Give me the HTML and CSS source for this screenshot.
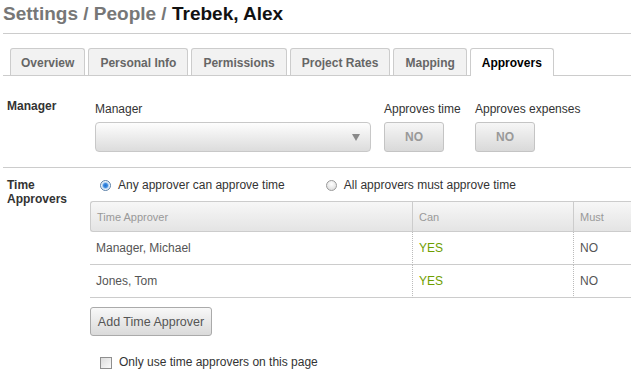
FILE: index.html
```html
<!DOCTYPE html>
<html lang="en">
<head>
    <meta charset="UTF-8">
    <meta name="viewport" content="width=device-width, initial-scale=1.0">
    <title>Approvers | Trebek, Alex</title>
    <link rel="stylesheet" href="styles.css">
</head>
<body>

    <div class="page">
        <!-- Breadcrumb title -->
        <h1 class="crumbs"><span class="crumb">Settings / People /</span> Trebek, Alex</h1>

        <!-- Tabs -->
        <ul class="tabs">
            <li class="tab">Overview</li>
            <li class="tab">Personal Info</li>
            <li class="tab">Permissions</li>
            <li class="tab">Project Rates</li>
            <li class="tab">Mapping</li>
            <li class="tab active">Approvers</li>
        </ul>

        <!-- Manager -->
        <section class="row row-manager">
            <h2 class="row-label">Manager</h2>
            <div class="row-body manager-fields">
                <div class="field field-manager">
                    <label class="field-label">Manager</label>
                    <div class="select"><span class="select-arrow"></span></div>
                </div>
                <div class="field field-time">
                    <label class="field-label">Approves time</label>
                    <button class="toggle">NO</button>
                </div>
                <div class="field field-expenses">
                    <label class="field-label">Approves expenses</label>
                    <button class="toggle">NO</button>
                </div>
            </div>
        </section>

        <!-- Time Approvers -->
        <section class="row row-approvers">
            <h2 class="row-label">Time<br>Approvers</h2>
            <div class="row-body">
                <div class="radios">
                    <label class="radio"><input type="radio" name="mode" checked> Any approver can approve time</label>
                    <label class="radio"><input type="radio" name="mode"> All approvers must approve time</label>
                </div>

                <table class="approvers">
                    <colgroup>
                        <col class="col-name">
                        <col class="col-can">
                        <col class="col-must">
                    </colgroup>
                    <thead>
                        <tr>
                            <th>Time Approver</th>
                            <th>Can</th>
                            <th>Must</th>
                        </tr>
                    </thead>
                    <tbody>
                        <tr>
                            <td>Manager, Michael</td>
                            <td class="yes">YES</td>
                            <td>NO</td>
                        </tr>
                        <tr>
                            <td>Jones, Tom</td>
                            <td class="yes">YES</td>
                            <td>NO</td>
                        </tr>
                    </tbody>
                </table>

                <button class="btn">Add Time Approver</button>

                <label class="check"><input type="checkbox"> Only use time approvers on this page</label>
            </div>
        </section>
    </div>

</body>
</html>
```

FILE: styles.css
```css
/* Reset */
body, h1, h2, ul, table {
    margin: 0;
    padding: 0;
}

body {
    font-family: "Liberation Sans", Arial, sans-serif;
    font-size: 12px;
    color: #333;
    background-color: #fff;
    overflow: hidden;
}

.page {
    padding-left: 3px;
}

/* Title */
.crumbs {
    font-size: 19px;
    line-height: 24px;
    padding: 2px 0 7px;
    border-bottom: 1px solid #ccc;
    color: #111;
}

.crumbs .crumb {
    color: #777;
}

/* Tabs */
.tabs {
    list-style: none;
    display: flex;
    gap: 3px;
    margin-top: 14px;
    padding-left: 7px;
    border-bottom: 1px solid #ccc;
}

.tab {
    padding: 2px 11px 0;
    line-height: 24px;
    font-size: 12px;
    font-weight: bold;
    color: #666;
    background-color: #f2f2f2;
    border: 1px solid #ccc;
    border-bottom: none;
    border-radius: 3px 3px 0 0;
}

.tab:first-child {
    padding: 2px 10px 0;
}

.tab.active {
    color: #000;
    background-color: #fff;
    margin-bottom: -1px;
    padding: 2px 11px 1px;
}

/* Section rows */
.row {
    display: grid;
    grid-template-columns: 87px 1fr;
    border-bottom: 1px solid #ccc;
}

.row-label {
    font-size: 12px;
    font-weight: bold;
    padding-left: 4px;
    color: #333;
}

.row-manager {
    padding: 23px 0 15px;
}

.row-manager .row-label {
    line-height: 15px;
}

.row-approvers {
    padding: 10px 0 0;
    border-bottom: none;
}

.row-approvers .row-label {
    line-height: 14px;
}

/* Manager fields */
.manager-fields {
    display: flex;
    padding-left: 5px;
}

.field-label {
    display: block;
    line-height: 15px;
    margin: 3px 0 5px;
    color: #333;
}

.select {
    position: relative;
    width: 274px;
    height: 28px;
    border: 1px solid #c8c8c8;
    border-radius: 4px;
    background: linear-gradient(#fdfdfd, #dcdcdc);
}

.select-arrow {
    position: absolute;
    right: 10px;
    top: 11px;
    border-left: 4px solid transparent;
    border-right: 4px solid transparent;
    border-top: 7px solid #8a8a8a;
}

.field-time {
    margin-left: 13px;
    width: 91px;
}

.toggle {
    display: block;
    width: 60px;
    height: 30px;
    padding: 0;
    font-family: inherit;
    font-size: 12px;
    font-weight: bold;
    color: #999;
    border: 1px solid #c4c4c4;
    border-radius: 3px;
    background: linear-gradient(#f6f6f6, #d9d9d9);
}

/* Radios */
.radios {
    display: flex;
    gap: 41px;
    padding-left: 10px;
    line-height: 15px;
    margin-bottom: 8px;
}

.radio {
    display: flex;
    align-items: center;
}

.radio input {
    appearance: none;
    width: 11px;
    height: 11px;
    margin: 0 7px 0 0;
    border: 1px solid #9a9a9a;
    border-radius: 50%;
    background: radial-gradient(circle at 50% 35%, #fff, #d5d5d5);
}

.radio input:checked {
    border-color: #5a7fa8;
    background: radial-gradient(circle, #1f6fd0 0, #3d8be0 2px, #a9cdf2 3px, #eef4fb 4px);
}

/* Approvers table */
.approvers {
    width: 560px;
    table-layout: fixed;
    border-collapse: separate;
    border-spacing: 0;
}

.col-name {
    width: 322px;
}

.col-can {
    width: 161px;
}

.approvers th {
    height: 29px;
    padding: 0 6px;
    text-align: left;
    font-size: 11px;
    font-weight: normal;
    color: #999;
    background: linear-gradient(#f7f7f7, #e4e4e4);
    border-top: 1px solid #ccc;
    border-bottom: 1px solid #ccc;
}

.approvers th:first-child {
    border-left: 1px solid #ccc;
    border-radius: 3px 0 0 3px;
}

.approvers th + th {
    border-left: 1px solid #ccc;
}

.approvers td {
    height: 32px;
    padding: 0 6px;
    color: #555;
    border-bottom: 1px solid #ccc;
}

.approvers td + td {
    border-left: 1px dotted #bbb;
}

.approvers .yes {
    color: #6f9e00;
}

/* Add button */
.btn {
    display: block;
    margin-top: 9px;
    width: 122px;
    height: 29px;
    padding: 0;
    font-family: inherit;
    font-size: 12.5px;
    color: #555;
    border: 1px solid #aaa;
    border-radius: 3px;
    background: linear-gradient(#f8f8f8, #dadada);
}

/* Checkbox */
.check {
    display: flex;
    align-items: center;
    margin-top: 19px;
    padding-left: 10px;
    line-height: 15px;
}

.check input {
    appearance: none;
    width: 12px;
    height: 12px;
    margin: 0 7px 0 0;
    border: 1px solid #8f8f8f;
    background: linear-gradient(135deg, #dcdcdc, #fafafa);
}
```
